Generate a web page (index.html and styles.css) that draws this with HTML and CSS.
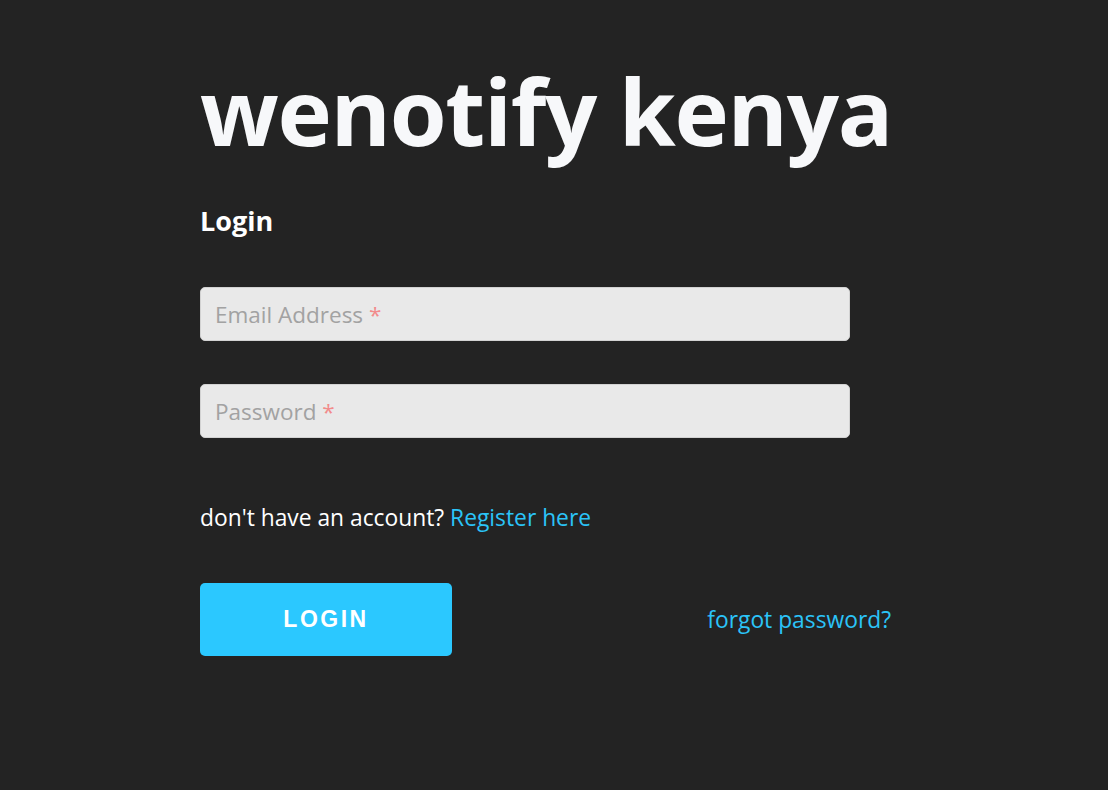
FILE: index.html
```html
<!DOCTYPE html>
<html lang="en">
<head>
<meta charset="utf-8">
<title>wenotify kenya</title>
<link rel="stylesheet" href="styles.css">
</head>
<body>
<main class="page">
  <h1 class="brand">wenotify kenya</h1>
  <h2 class="heading">Login</h2>
  <form class="form">
    <div class="field"><span class="placeholder">Email Address <span class="req">*</span></span></div>
    <div class="field"><span class="placeholder">Password <span class="req">*</span></span></div>
    <p class="register">don't have an account? <a class="link" href="#">Register here</a></p>
    <div class="actions">
      <button type="button" class="btn">LOGIN</button>
      <a class="link forgot" href="#">forgot password?</a>
    </div>
  </form>
</main>
</body>
</html>
```

FILE: styles.css
```css
html, body {
  margin: 0;
  padding: 0;
  background: #232323;
  height: 100%;
}
body {
  font-family: "Open Sans", "Noto Sans", sans-serif;
  color: #ffffff;
}
.page {
  width: 691px;
  margin-left: 200px;
  padding-top: 56px;
  display: flex;
  flex-direction: column;
}
.brand {
  margin: 0;
  font-size: 92px;
  font-weight: 700;
  line-height: 110px;
  color: #f7f8fa;
  white-space: nowrap;
  letter-spacing: -1.3px;
}
.heading {
  margin: 38px 0 0;
  font-size: 27px;
  font-weight: 700;
  line-height: 34px;
}
.form {
  margin-top: 49px;
  display: flex;
  flex-direction: column;
}
.field {
  width: 650px;
  height: 54px;
  box-sizing: border-box;
  background: #e9e9e9;
  border: 1px solid #d2d2d2;
  border-radius: 5px;
  display: flex;
  align-items: center;
  padding-left: 14px;
  margin-bottom: 43px;
  font-size: 22.5px;
}
.placeholder { color: #a2a2a2; }
.req { color: #f28b8b; }
.register {
  margin: 22px 0 0;
  font-size: 22.8px;
  line-height: 30px;
}
.link {
  color: #2bc4f8;
  text-decoration: none;
}
.actions {
  margin-top: 50px;
  display: flex;
  align-items: center;
  justify-content: space-between;
}
.btn {
  width: 252px;
  height: 73px;
  border: none;
  border-radius: 5px;
  background: #2bc8ff;
  color: #ffffff;
  font-family: "Liberation Sans", Arial, sans-serif;
  font-size: 23px;
  font-weight: 700;
  letter-spacing: 2.5px;
  padding: 0;
  cursor: pointer;
}
.forgot {
  font-size: 22.8px;
  line-height: 30px;
}
```
